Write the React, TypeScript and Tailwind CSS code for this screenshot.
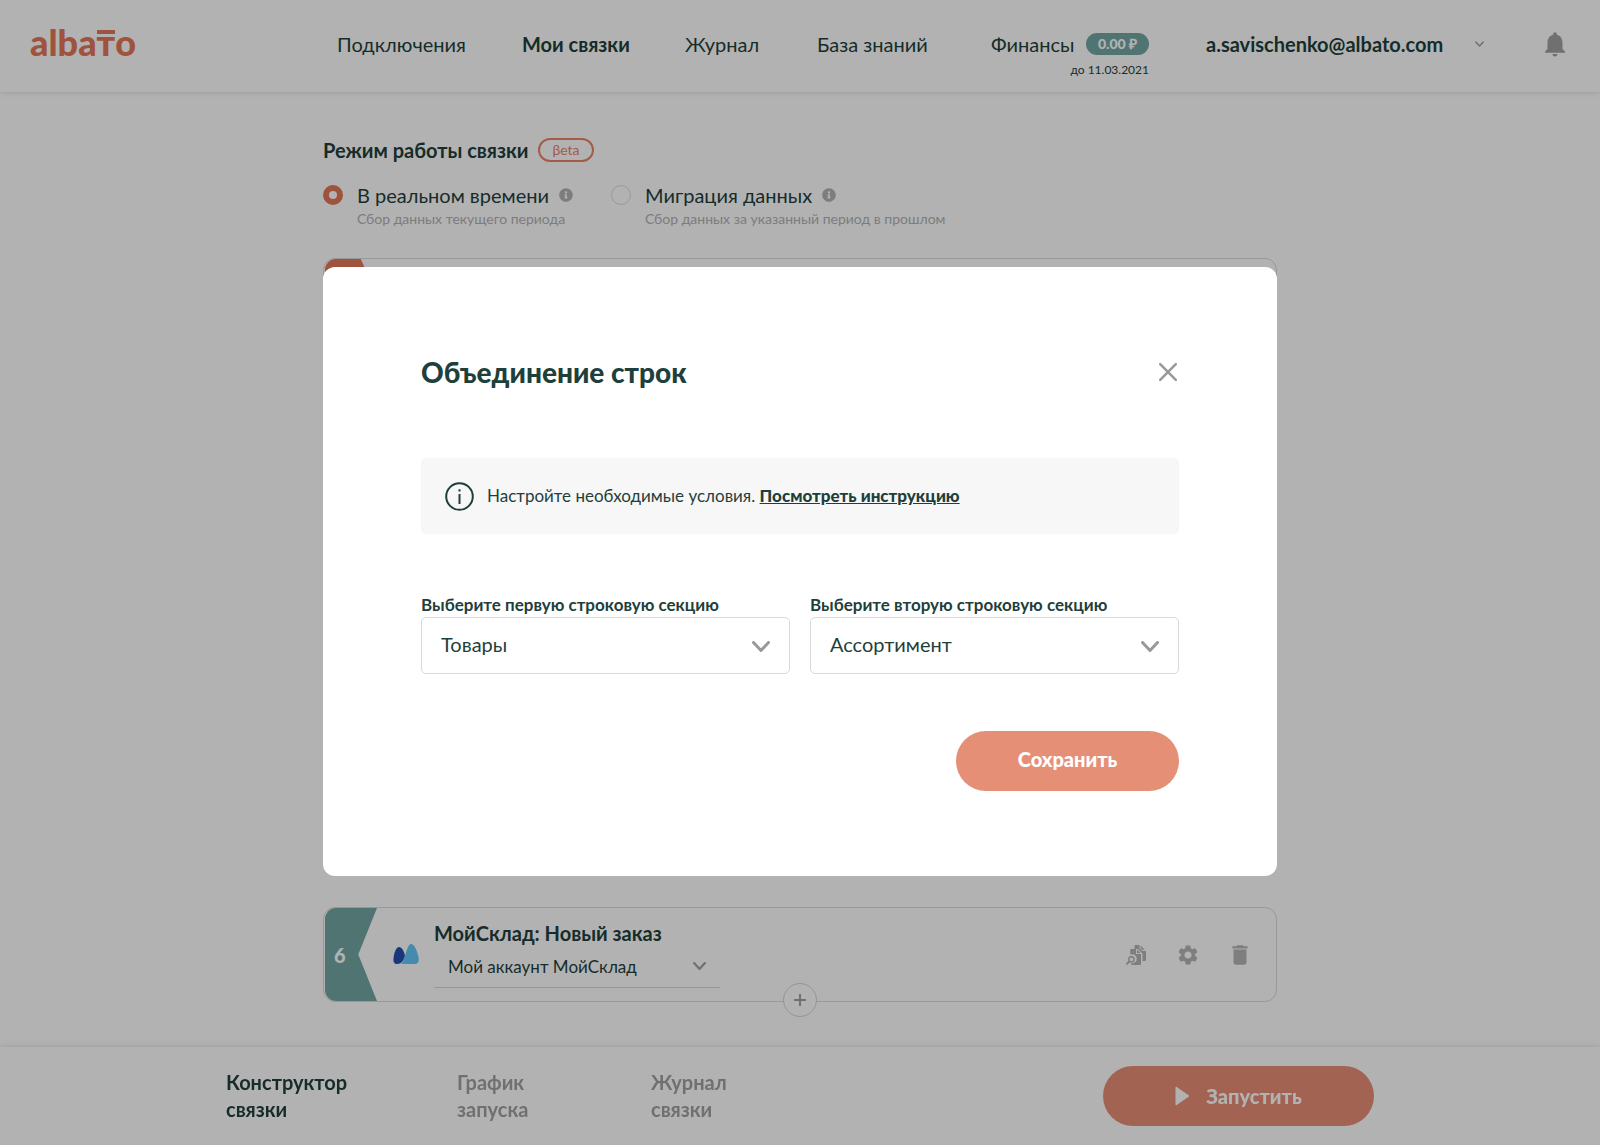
import React, { useState } from 'react';
import { FaInfoCircle } from 'react-icons/fa';
import { MdDelete, MdNotifications, MdSettings } from 'react-icons/md';

const navLinks = [
  { label: 'Подключения', className: 'w-[125px]' },
  { label: 'Мои связки', className: 'w-[103px] font-bold' },
  { label: 'Журнал', className: 'w-[72px]' },
  { label: 'База знаний', className: 'w-[114px]' },
];

const modes = [
  { id: 'realtime', title: 'В реальном времени', hint: 'Сбор данных текущего периода' },
  { id: 'migration', title: 'Миграция данных', hint: 'Сбор данных за указанный период в прошлом' },
];

const footerTabs = [
  { lines: ['Конструктор', 'связки'], className: 'w-[231px] text-[#1f3f3b]' },
  { lines: ['График', 'запуска'], className: 'w-[194px] text-[#a1a1a1]' },
  { lines: ['Журнал', 'связки'], className: 'text-[#a1a1a1]' },
];

const Chevron: React.FC<{ className: string; strokeWidth?: number }> = ({ className, strokeWidth = 2 }) => (
  <svg viewBox="0 0 18 11" fill="none" stroke="currentColor" strokeWidth={strokeWidth} strokeLinecap="round" strokeLinejoin="round" className={`pointer-events-none ${className}`}>
    <path d="M1.5 1.5 9 9.5l7.5-8" />
  </svg>
);

const DocSearchIcon = () => (
  <svg viewBox="0 0 20 20" className="h-5 w-5" fill="currentColor">
    <path d="M8.500 1a1 1 0 0 1 1-1h4v3.200L16.500 6H20v9a1 1 0 0 1-1 1h-2.500V8.500L12 4H8.500z" />
    <path d="M14.600.6 18.800 4.800h-2.600l-1.600-1.500z" />
    <path d="M4.200 5a1 1 0 0 1 1-1H10v5h5v10a1 1 0 0 1-1 1H5.500l-.6-1.800A4.600 4.600 0 1 0 4.200 9.600z" />
    <path d="m11 4.400 3.600 3.600H11z" />
    <circle cx="5.400" cy="14.400" r="2.600" fill="none" stroke="currentColor" strokeWidth="1.400" />
    <path d="m3.400 16.400-2.400 2.400" fill="none" stroke="currentColor" strokeWidth="2" strokeLinecap="round" />
  </svg>
);

const Header = () => (
  <header className="flex h-[92px] items-center bg-white px-[30px] pb-1 text-xl leading-6 whitespace-nowrap shadow-[0_1px_5px_rgba(0,0,0,0.12)]">
    <a href="#" className="w-[307px] shrink-0 pb-1 text-4xl font-black text-[#e47657]">
      alba
      <span className="relative">
        т
        <span className="absolute top-[10px] left-0 h-1 w-full bg-[#e47657]"></span>
      </span>
      o
    </a>
    <nav className="flex gap-[60px]">
      {navLinks.map((link) => (
        <a key={link.label} href="#" className={link.className}>{link.label}</a>
      ))}
      <a href="#" className="relative flex w-[158px] items-center justify-between">
        Финансы
        <span className="rounded-full bg-[#73a7a3] px-3 text-sm leading-[22px] font-black text-white">0.00 ₽</span>
        <span className="absolute top-full right-0 pt-1 text-xs leading-5">до 11.03.2021</span>
      </a>
    </nav>
    <button className="ml-[57px] flex items-center gap-8 font-bold">
      a.savischenko@albato.com
      <Chevron className="h-[6px] w-[9px] text-[#a1a1a1]" strokeWidth={3} />
    </button>
    <button aria-label="Уведомления" className="ml-auto text-[#a1a1a1]">
      <MdNotifications size={30} />
    </button>
  </header>
);

const ModePicker = () => {
  const [mode, setMode] = useState('realtime');

  return (
    <section>
      <div className="flex items-center gap-[10px]">
        <h2 className="text-xl leading-6 font-bold">Режим работы связки</h2>
        <span className="h-6 rounded-full border-2 border-[#ea8468] px-3 text-sm leading-5 text-[#ea8468]">βeta</span>
      </div>
      <div className="mt-[21px] flex gap-[38px]">
        {modes.map((item) => (
          <div key={item.id} className="flex gap-[14px]">
            <input
              type="radio"
              name="mode"
              id={item.id}
              checked={mode === item.id}
              onChange={() => setMode(item.id)}
              className="mt-[2px] h-5 w-5 shrink-0 appearance-none rounded-full border border-[#dcdcdc] checked:border-[6px] checked:border-[#e47657]"
            />
            <div>
              <div className="flex items-center gap-[10px]">
                <label htmlFor={item.id} className="text-xl leading-6">{item.title}</label>
                <FaInfoCircle size={14} className="text-[#b3b3b3]" />
              </div>
              <p className="mt-[2px] text-sm leading-5 text-[#b3b3b3]">{item.hint}</p>
            </div>
          </div>
        ))}
      </div>
    </section>
  );
};

const StepCard = () => (
  <div className="relative flex h-[95px] rounded-xl border border-[#dadada] bg-white">
    <div className="ml-px flex w-[52px] items-center rounded-l-[11px] bg-[#73a7a3] pl-[9px] text-xl font-black text-white [clip-path:polygon(0_0,100%_0,64%_50%,100%_100%,0_100%)]">
      6
    </div>
    <svg viewBox="0 0 26 20" className="mt-9 ml-4 h-5 w-[26px]">
      <path d="M.5 14C1.200 8.500 3.200 3 6 3s4.800 3.500 6 9c-1.500 4.500-3.500 8-8 8-2.600 0-4-2-3.500-6z" fill="#2850b0" />
      <path d="M8 20c2.500-2 3.200-6.500 5-11.500C14.500 4 16 0 18 0c3.200 0 6 6 7.500 13 .9 4-.3 7-3.500 7z" fill="#64c8fa" />
    </svg>
    <div className="ml-[15px] w-[286px] pt-3">
      <h3 className="text-xl leading-[26px] font-bold">МойСклад: Новый заказ</h3>
      <div className="relative border-b border-[#d6d6d6]">
        <select aria-label="Аккаунт" className="h-[41px] w-full appearance-none bg-transparent px-[14px] text-[17px]">
          <option>Мой аккаунт МойСклад</option>
        </select>
        <Chevron className="absolute top-4 right-[14px] h-2 w-[13px] text-[#a1a1a1]" strokeWidth={3} />
      </div>
    </div>
    <div className="mr-6 ml-auto flex items-center gap-7 text-[#b5b5b5]">
      <button aria-label="Просмотр" className="flex w-6 justify-center"><DocSearchIcon /></button>
      <button aria-label="Настройки" className="flex w-6 justify-center"><MdSettings size={24} /></button>
      <button aria-label="Удалить" className="flex w-6 justify-center"><MdDelete size={26} className="shrink-0" /></button>
    </div>
    <button aria-label="Добавить шаг" className="absolute -bottom-4 left-1/2 flex h-[34px] w-[34px] -translate-x-1/2 items-center justify-center rounded-full border border-[#d6d6d6] bg-white text-[#a1a1a1]">
      <svg viewBox="0 0 12 12" className="h-3 w-3" stroke="currentColor" strokeWidth="2">
        <path d="M6 0v12M0 6h12" />
      </svg>
    </button>
  </div>
);

const Footer = () => (
  <footer className="fixed inset-x-0 bottom-0 bg-white shadow-[0_-1px_5px_rgba(0,0,0,0.1)]">
    <div className="mx-auto flex h-[98px] max-w-[1148px] items-center">
      {footerTabs.map((tab) => (
        <a key={tab.lines.join(' ')} href="#" className={`text-xl leading-[27px] font-bold ${tab.className}`}>
          {tab.lines[0]}
          <br />
          {tab.lines[1]}
        </a>
      ))}
      <button className="ml-auto flex h-[60px] w-[271px] items-center justify-center gap-4 rounded-full bg-[#e88f76] text-xl font-black text-white">
        <svg viewBox="0 0 15 20" className="h-5 w-[15px]" fill="currentColor" stroke="currentColor" strokeWidth="1" strokeLinejoin="round">
          <path d="M1 1v18l13-9z" />
        </svg>
        Запустить
      </button>
    </div>
  </footer>
);

const SelectField: React.FC<{ id: string; label: string; value: string }> = ({ id, label, value }) => (
  <div>
    <label htmlFor={id} className="block text-[17px] leading-6 font-bold">{label}</label>
    <div className="relative">
      <select id={id} className="h-[57px] w-full appearance-none rounded-[5px] border border-[#dadada] bg-white px-[19px] pb-1 text-xl">
        <option>{value}</option>
      </select>
      <Chevron className="absolute top-6 right-5 h-[11px] w-[18px] text-[#999999]" strokeWidth={3} />
    </div>
  </div>
);

const MergeDialog = () => (
  <div className="fixed inset-0 flex items-center justify-center bg-black/30 pb-0.5">
    <div role="dialog" aria-labelledby="merge-title" className="w-full max-w-[954px] rounded-xl bg-white px-[98px] pt-[88px] pb-[85px]">
      <div className="flex items-center justify-between">
        <h1 id="merge-title" className="text-[28px] leading-[34px] font-black">Объединение строк</h1>
        <button aria-label="Закрыть" className="pr-[2px] text-[#999999]">
          <svg viewBox="0 0 18 18" className="h-[18px] w-[18px]" stroke="currentColor" strokeWidth="2.500" strokeLinecap="round">
            <path d="m1.200 1.200 15.600 15.600M16.800 1.200 1.200 16.800" />
          </svg>
        </button>
      </div>
      <div className="mt-[69px] flex h-[76px] items-center gap-[13px] rounded-[5px] bg-[#f7f7f7] px-6">
        <svg viewBox="0 0 29 29" className="h-[29px] w-[29px]" fill="none" stroke="currentColor" strokeWidth="2">
          <circle cx="14.500" cy="14.500" r="13.300" />
          <path d="M14.500 12v10M14.500 7.200v2.300" />
        </svg>
        <p className="text-[17px] leading-6">
          Настройте необходимые условия. <a href="#" className="font-black underline">Посмотреть инструкцию</a>
        </p>
      </div>
      <div className="mt-[59px] grid grid-cols-2 gap-5">
        <SelectField id="first-section" label="Выберите первую строковую секцию" value="Товары" />
        <SelectField id="second-section" label="Выберите вторую строковую секцию" value="Ассортимент" />
      </div>
      <button className="mt-[57px] ml-auto block h-[60px] w-[223px] rounded-full bg-[#e68f77] pb-1 text-xl font-black text-white">
        Сохранить
      </button>
    </div>
  </div>
);

export default function App() {
  return (
    <div className="min-h-screen bg-white font-[Lato,sans-serif] text-[#1f3f3b]">
      <Header />
      <main className="mx-auto max-w-[954px] pt-[46px] pb-[142px]">
        <ModePicker />
        <div className="mt-[29px] mb-[32px] h-[617px] rounded-xl border border-[#dadada]">
          <div className="ml-px h-[93px] w-[56px] rounded-l-[11px] bg-[#e47657] [clip-path:polygon(0_0,64%_0,100%_50%,64%_100%,0_100%)]"></div>
        </div>
        <StepCard />
      </main>
      <Footer />
      <MergeDialog />
    </div>
  );
}
